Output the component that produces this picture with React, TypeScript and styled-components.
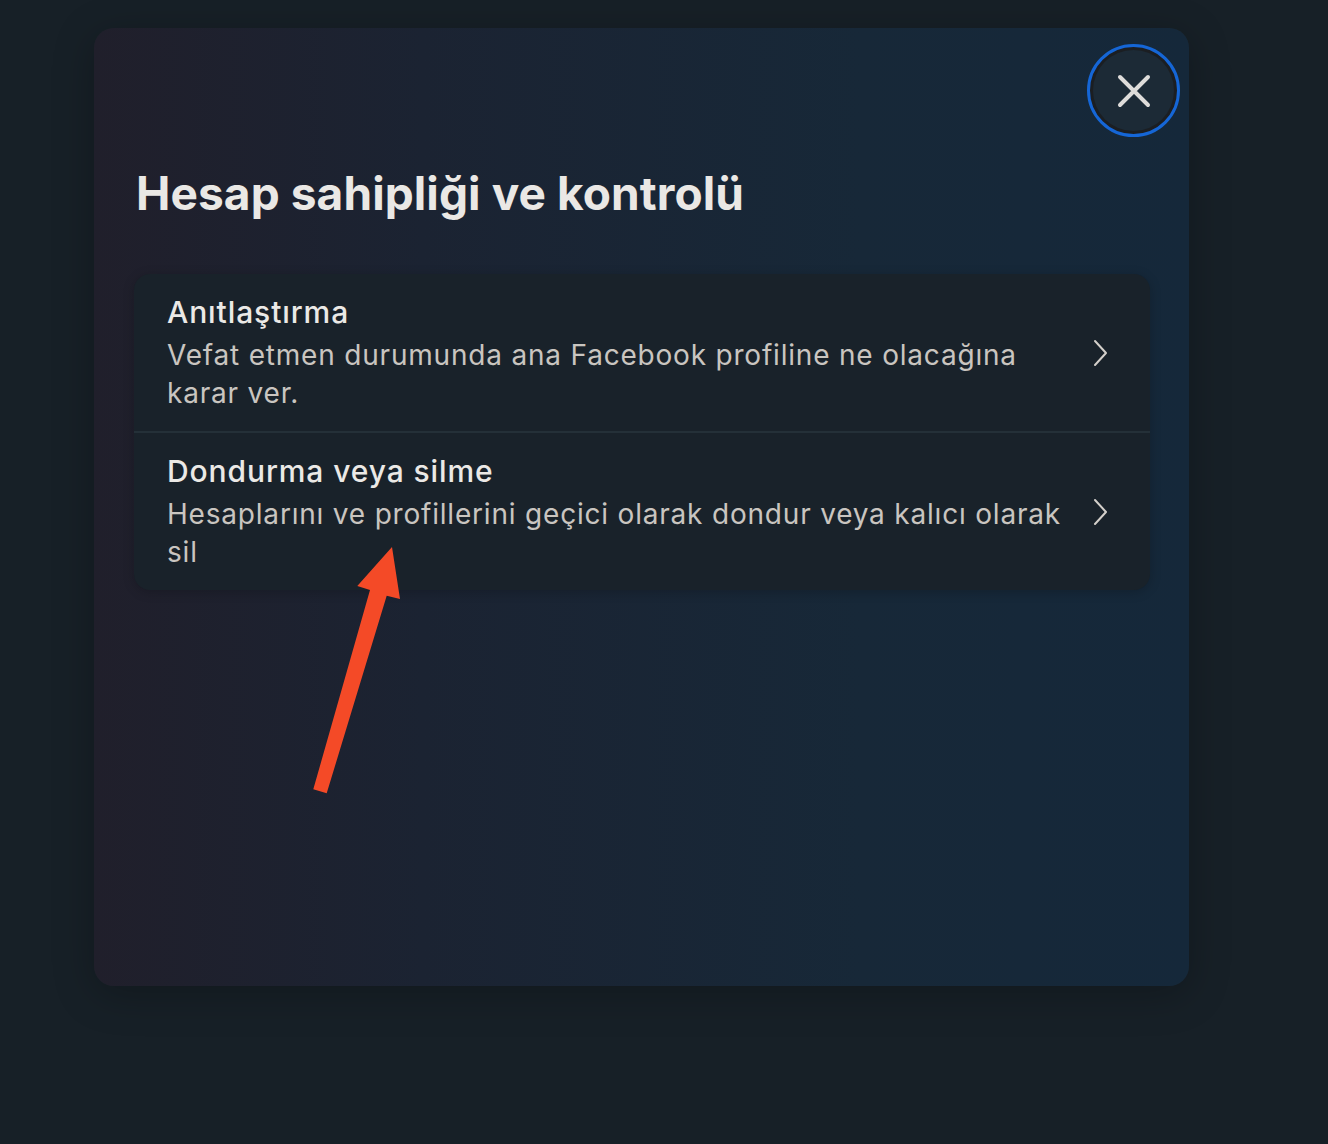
import React from "react";
import styled, { createGlobalStyle } from "styled-components";

const Global = createGlobalStyle`
  html, body { margin: 0; padding: 0; background: #172027; }
  * { box-sizing: border-box; }
`;

const Page = styled.div`
  position: relative;
  width: 1328px;
  height: 1144px;
  padding: 28px 139px 0 94px;
  background: #172027;
  font-family: Inter, "Noto Sans", sans-serif;
  overflow: hidden;
`;

const Modal = styled.div`
  width: 1095px;
  height: 958px;
  border-radius: 20px;
  background: linear-gradient(90deg, #201f2b 0%, #1b2332 30%, #172838 70%, #15283a 100%);
  box-shadow: 0 8px 40px rgba(0, 0, 0, 0.25);
  padding: 16px 9px 0 40px;
  display: flex;
  flex-direction: column;
`;

const TopBar = styled.div`
  display: flex;
  justify-content: flex-end;
`;

const CloseButton = styled.button`
  width: 93px;
  height: 93px;
  border-radius: 50%;
  border: 3px solid #1566d6;
  padding: 3px;
  background: #1b1e22;
  display: flex;
  align-items: center;
  justify-content: center;
  cursor: pointer;
`;

const CloseInner = styled.span`
  width: 100%;
  height: 100%;
  border-radius: 50%;
  background: #1c2a36;
  display: flex;
  align-items: center;
  justify-content: center;
`;

const Title = styled.h1`
  margin: 30px 0 0 2px;
  font-size: 46px;
  line-height: 52px;
  font-weight: 700;
  color: #eae8e5;
  letter-spacing: 0.1px;
`;

const Card = styled.div`
  margin-top: 55px;
  width: 1016px;
  border-radius: 16px;
  background: #19222a;
  box-shadow: 0 2px 12px rgba(0, 0, 0, 0.2);
  overflow: hidden;
`;

const Row = styled.div<{ $divider?: boolean }>`
  display: flex;
  align-items: center;
  padding: 19px 42px 19px 33px;
  border-bottom: ${(p) => (p.$divider ? "2px solid #243038" : "none")};
  cursor: pointer;
`;

const RowText = styled.div`
  flex: 1;
  display: flex;
  flex-direction: column;
  padding-right: 24px;
`;

const RowTitle = styled.div`
  font-size: 30px;
  line-height: 38px;
  font-weight: 500;
  color: #ebe9e6;
  letter-spacing: 0.9px;
  margin-bottom: 5px;
`;

const RowSub = styled.div`
  font-size: 28px;
  line-height: 38px;
  font-weight: 400;
  color: #c9c5c0;
  letter-spacing: 0.8px;
`;

const Chevron = () => (
  <svg width="16" height="28" viewBox="0 0 16 28" fill="none">
    <path d="M3 2 L14 14 L3 26" stroke="#d3cfca" strokeWidth="2" strokeLinecap="round" strokeLinejoin="round" />
  </svg>
);

const Arrow = styled.svg`
  position: absolute;
  left: 0;
  top: 0;
  pointer-events: none;
`;

export default function App() {
  return (
    <>
      <Global />
      <Page>
        <Modal>
          <TopBar>
            <CloseButton aria-label="Kapat">
              <CloseInner>
                <svg width="34" height="34" viewBox="0 0 34 34">
                  <path d="M3 3 L31 31 M31 3 L3 31" stroke="#dedcda" strokeWidth="4" strokeLinecap="round" />
                </svg>
              </CloseInner>
            </CloseButton>
          </TopBar>
          <Title>Hesap sahipliği ve kontrolü</Title>
          <Card>
            <Row $divider>
              <RowText>
                <RowTitle>Anıtlaştırma</RowTitle>
                <RowSub>Vefat etmen durumunda ana Facebook profiline ne olacağına karar ver.</RowSub>
              </RowText>
              <Chevron />
            </Row>
            <Row>
              <RowText>
                <RowTitle>Dondurma veya silme</RowTitle>
                <RowSub>Hesaplarını ve profillerini geçici olarak dondur veya kalıcı olarak sil</RowSub>
              </RowText>
              <Chevron />
            </Row>
          </Card>
        </Modal>
        <Arrow width="1328" height="1144" viewBox="0 0 1328 1144">
          <polygon
            points="392,547 400,599 386.7,595.7 326.7,793.3 313.3,789.3 370,590 357.3,586"
            fill="#f44a27"
          />
        </Arrow>
      </Page>
    </>
  );
}
